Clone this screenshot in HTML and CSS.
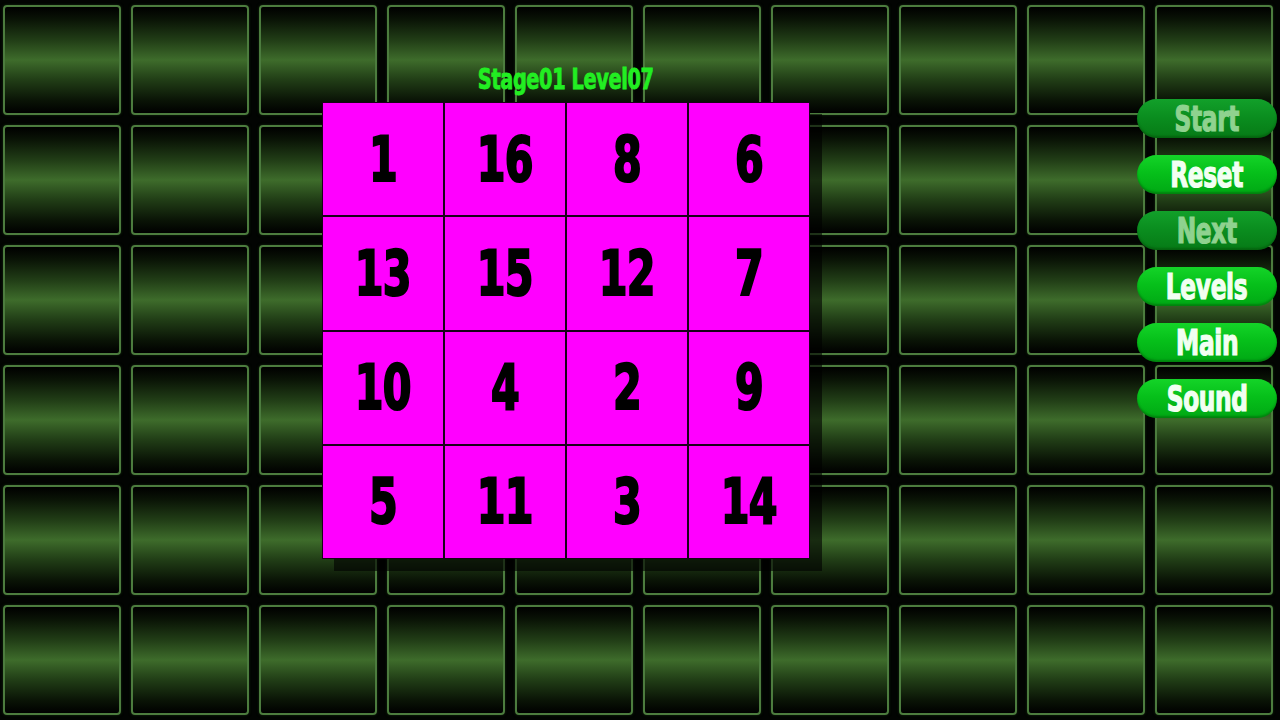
FILE: index.html
```html
<!DOCTYPE html>
<html>
<head>
<meta charset="utf-8">
<link rel="stylesheet" href="styles.css">
</head>
<body>
<div class="backdrop">
  <div class="tile"></div><div class="tile"></div><div class="tile"></div><div class="tile"></div><div class="tile"></div><div class="tile"></div><div class="tile"></div><div class="tile"></div><div class="tile"></div><div class="tile"></div>
  <div class="tile"></div><div class="tile"></div><div class="tile"></div><div class="tile"></div><div class="tile"></div><div class="tile"></div><div class="tile"></div><div class="tile"></div><div class="tile"></div><div class="tile"></div>
  <div class="tile"></div><div class="tile"></div><div class="tile"></div><div class="tile"></div><div class="tile"></div><div class="tile"></div><div class="tile"></div><div class="tile"></div><div class="tile"></div><div class="tile"></div>
  <div class="tile"></div><div class="tile"></div><div class="tile"></div><div class="tile"></div><div class="tile"></div><div class="tile"></div><div class="tile"></div><div class="tile"></div><div class="tile"></div><div class="tile"></div>
  <div class="tile"></div><div class="tile"></div><div class="tile"></div><div class="tile"></div><div class="tile"></div><div class="tile"></div><div class="tile"></div><div class="tile"></div><div class="tile"></div><div class="tile"></div>
  <div class="tile"></div><div class="tile"></div><div class="tile"></div><div class="tile"></div><div class="tile"></div><div class="tile"></div><div class="tile"></div><div class="tile"></div><div class="tile"></div><div class="tile"></div>
</div>

<div class="game">
  <div class="title"><span class="squeeze">Stage01 Level07</span></div>
  <div class="board">
    <div class="cell"><span class="num">1</span></div><div class="cell"><span class="num">16</span></div><div class="cell"><span class="num">8</span></div><div class="cell"><span class="num">6</span></div>
    <div class="cell"><span class="num">13</span></div><div class="cell"><span class="num">15</span></div><div class="cell"><span class="num">12</span></div><div class="cell"><span class="num">7</span></div>
    <div class="cell"><span class="num">10</span></div><div class="cell"><span class="num">4</span></div><div class="cell"><span class="num">2</span></div><div class="cell"><span class="num">9</span></div>
    <div class="cell"><span class="num">5</span></div><div class="cell"><span class="num">11</span></div><div class="cell"><span class="num">3</span></div><div class="cell"><span class="num">14</span></div>
  </div>
</div>

<div class="menu">
  <div class="btn disabled"><span class="label">Start</span></div>
  <div class="btn"><span class="label">Reset</span></div>
  <div class="btn disabled"><span class="label">Next</span></div>
  <div class="btn"><span class="label">Levels</span></div>
  <div class="btn"><span class="label">Main</span></div>
  <div class="btn"><span class="label">Sound</span></div>
</div>
</body>
</html>
```

FILE: styles.css
```css
html, body {
  margin: 0;
  padding: 0;
  width: 1280px;
  height: 720px;
  overflow: hidden;
  background: #020402;
  font-family: "DejaVu Sans Condensed", "DejaVu Sans", "Liberation Sans", sans-serif;
  font-weight: bold;
}

.backdrop {
  display: grid;
  grid-template-columns: repeat(10, 118px);
  grid-template-rows: repeat(6, 110px);
  gap: 10px;
  padding: 5px 0 0 3px;
}

.tile {
  box-sizing: border-box;
  border: 2px solid #4c7c3e;
  border-radius: 4px;
  background: linear-gradient(to bottom, #000 0%, #0a1406 12%, #223f17 32%, #3e6c2b 50%, #223f17 68%, #0a1406 88%, #000 100%);
  box-shadow: 0 0 3px rgba(40, 80, 30, 0.5);
}

.game {
  position: absolute;
  left: 322px;
  top: 62px;
  width: 488px;
  display: flex;
  flex-direction: column;
  align-items: center;
}

.title {
  color: #22ee22;
  font-size: 29px;
  line-height: 34px;
  height: 40px;
}

.squeeze {
  display: inline-block;
  transform: scaleX(0.74);
  -webkit-text-stroke: 0.8px #22ee22;
  letter-spacing: -0.5px;
}

.board {
  box-sizing: border-box;
  width: 488px;
  height: 457px;
  display: grid;
  grid-template-columns: repeat(4, 1fr);
  grid-template-rows: repeat(4, 1fr);
  gap: 2px;
  padding: 1px;
  background: #1a001a;
  box-shadow: 12px 12px 0 rgba(0, 0, 0, 0.6);
}

.cell {
  background: #ff00ff;
  color: #000;
  font-size: 62px;
  display: flex;
  align-items: center;
  justify-content: center;
}

.num {
  display: inline-block;
  transform: scaleX(0.74);
  -webkit-text-stroke: 2.2px #000;
  letter-spacing: -1px;
}

.menu {
  position: absolute;
  left: 1137px;
  top: 99px;
  display: flex;
  flex-direction: column;
  gap: 17px;
}

.btn {
  width: 140px;
  height: 39px;
  border-radius: 20px;
  background: linear-gradient(to bottom, #14d428 0%, #06c01a 45%, #00a814 100%);
  color: #f2fff2;
  font-size: 36px;
  line-height: 39px;
  text-align: center;
  box-shadow: inset 0 -2px 2px rgba(0, 60, 0, 0.35);
}

.label {
  display: inline-block;
  transform: scaleX(0.72);
  -webkit-text-stroke: 1.2px #f2fff2;
  letter-spacing: -0.5px;
}

.btn.disabled {
  background: linear-gradient(to bottom, #12a02a 0%, #0a8c1e 50%, #067a16 100%);
  color: #8fd28f;
}

.btn.disabled .label {
  -webkit-text-stroke-color: #8fd28f;
}
```
